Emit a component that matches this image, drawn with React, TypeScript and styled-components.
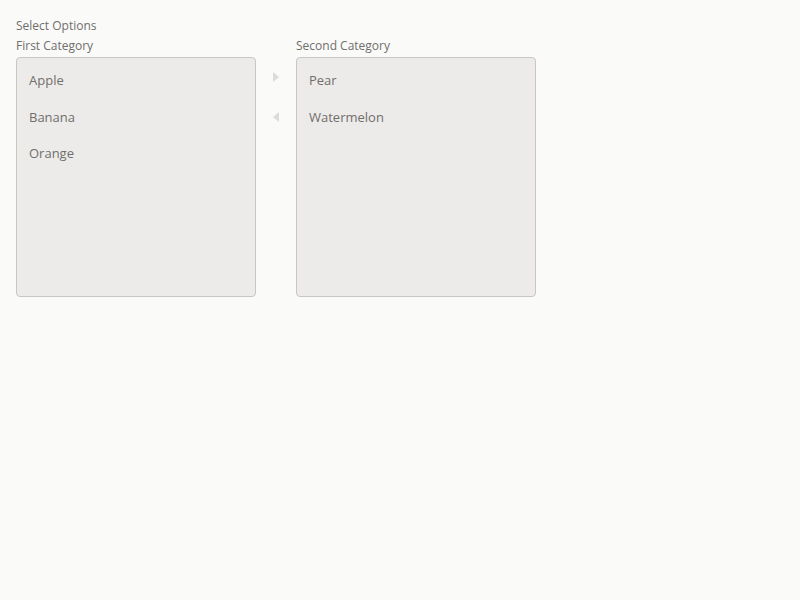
import * as React from "react"
import styled, { createGlobalStyle } from "styled-components"

const GlobalStyle = createGlobalStyle`
  html, body {
    margin: 0;
    padding: 0;
    background: #fafaf9;
  }
  body {
    font-family: "Open Sans", "Liberation Sans", sans-serif;
    color: #706e6b;
  }
`

const Page = styled.div`
  padding: 16px;
`

const Legend = styled.div`
  font-size: 12px;
  line-height: 18px;
  color: #706e6b;
  margin-top: 1px;
`

const Lists = styled.div`
  display: flex;
  align-items: flex-start;
  margin-top: 2px;
`

const Column = styled.div`
  display: flex;
  flex-direction: column;
  width: 240px;
`

const ColumnLabel = styled.div`
  font-size: 12px;
  line-height: 18px;
  color: #706e6b;
  margin-bottom: 2px;
`

const Listbox = styled.ul`
  list-style: none;
  margin: 0;
  padding: 4px 0;
  box-sizing: border-box;
  height: 240px;
  border: 1px solid #c9c7c5;
  border-radius: 4px;
  background: #ecebea;
`

const Option = styled.li`
  padding: 8px 12px;
  font-size: 13px;
  line-height: 20.5px;
  color: #706e6b;
`

const Buttons = styled.div`
  width: 40px;
  display: flex;
  flex-direction: column;
  align-items: center;
  padding-top: 34px;
  gap: 28px;
`

const ArrowButton = styled.button`
  width: 12px;
  height: 12px;
  padding: 0;
  border: none;
  background: transparent;
  display: flex;
  align-items: center;
  justify-content: center;
  cursor: default;
`

function Arrow({ dir }: { dir: "right" | "left" }) {
  return (
    <svg width="6" height="10" viewBox="0 0 6 10">
      {dir === "right" ? (
        <path d="M0 0 L6 5 L0 10 Z" fill="#dddbda" />
      ) : (
        <path d="M6 0 L0 5 L6 10 Z" fill="#dddbda" />
      )}
    </svg>
  )
}

export default function App() {
  return (
    <Page>
      <GlobalStyle />
      <Legend>Select Options</Legend>
      <Lists>
        <Column>
          <ColumnLabel>First Category</ColumnLabel>
          <Listbox>
            <Option>Apple</Option>
            <Option>Banana</Option>
            <Option>Orange</Option>
          </Listbox>
        </Column>
        <Buttons>
          <ArrowButton disabled>
            <Arrow dir="right" />
          </ArrowButton>
          <ArrowButton disabled>
            <Arrow dir="left" />
          </ArrowButton>
        </Buttons>
        <Column>
          <ColumnLabel>Second Category</ColumnLabel>
          <Listbox>
            <Option>Pear</Option>
            <Option>Watermelon</Option>
          </Listbox>
        </Column>
      </Lists>
    </Page>
  )
}
